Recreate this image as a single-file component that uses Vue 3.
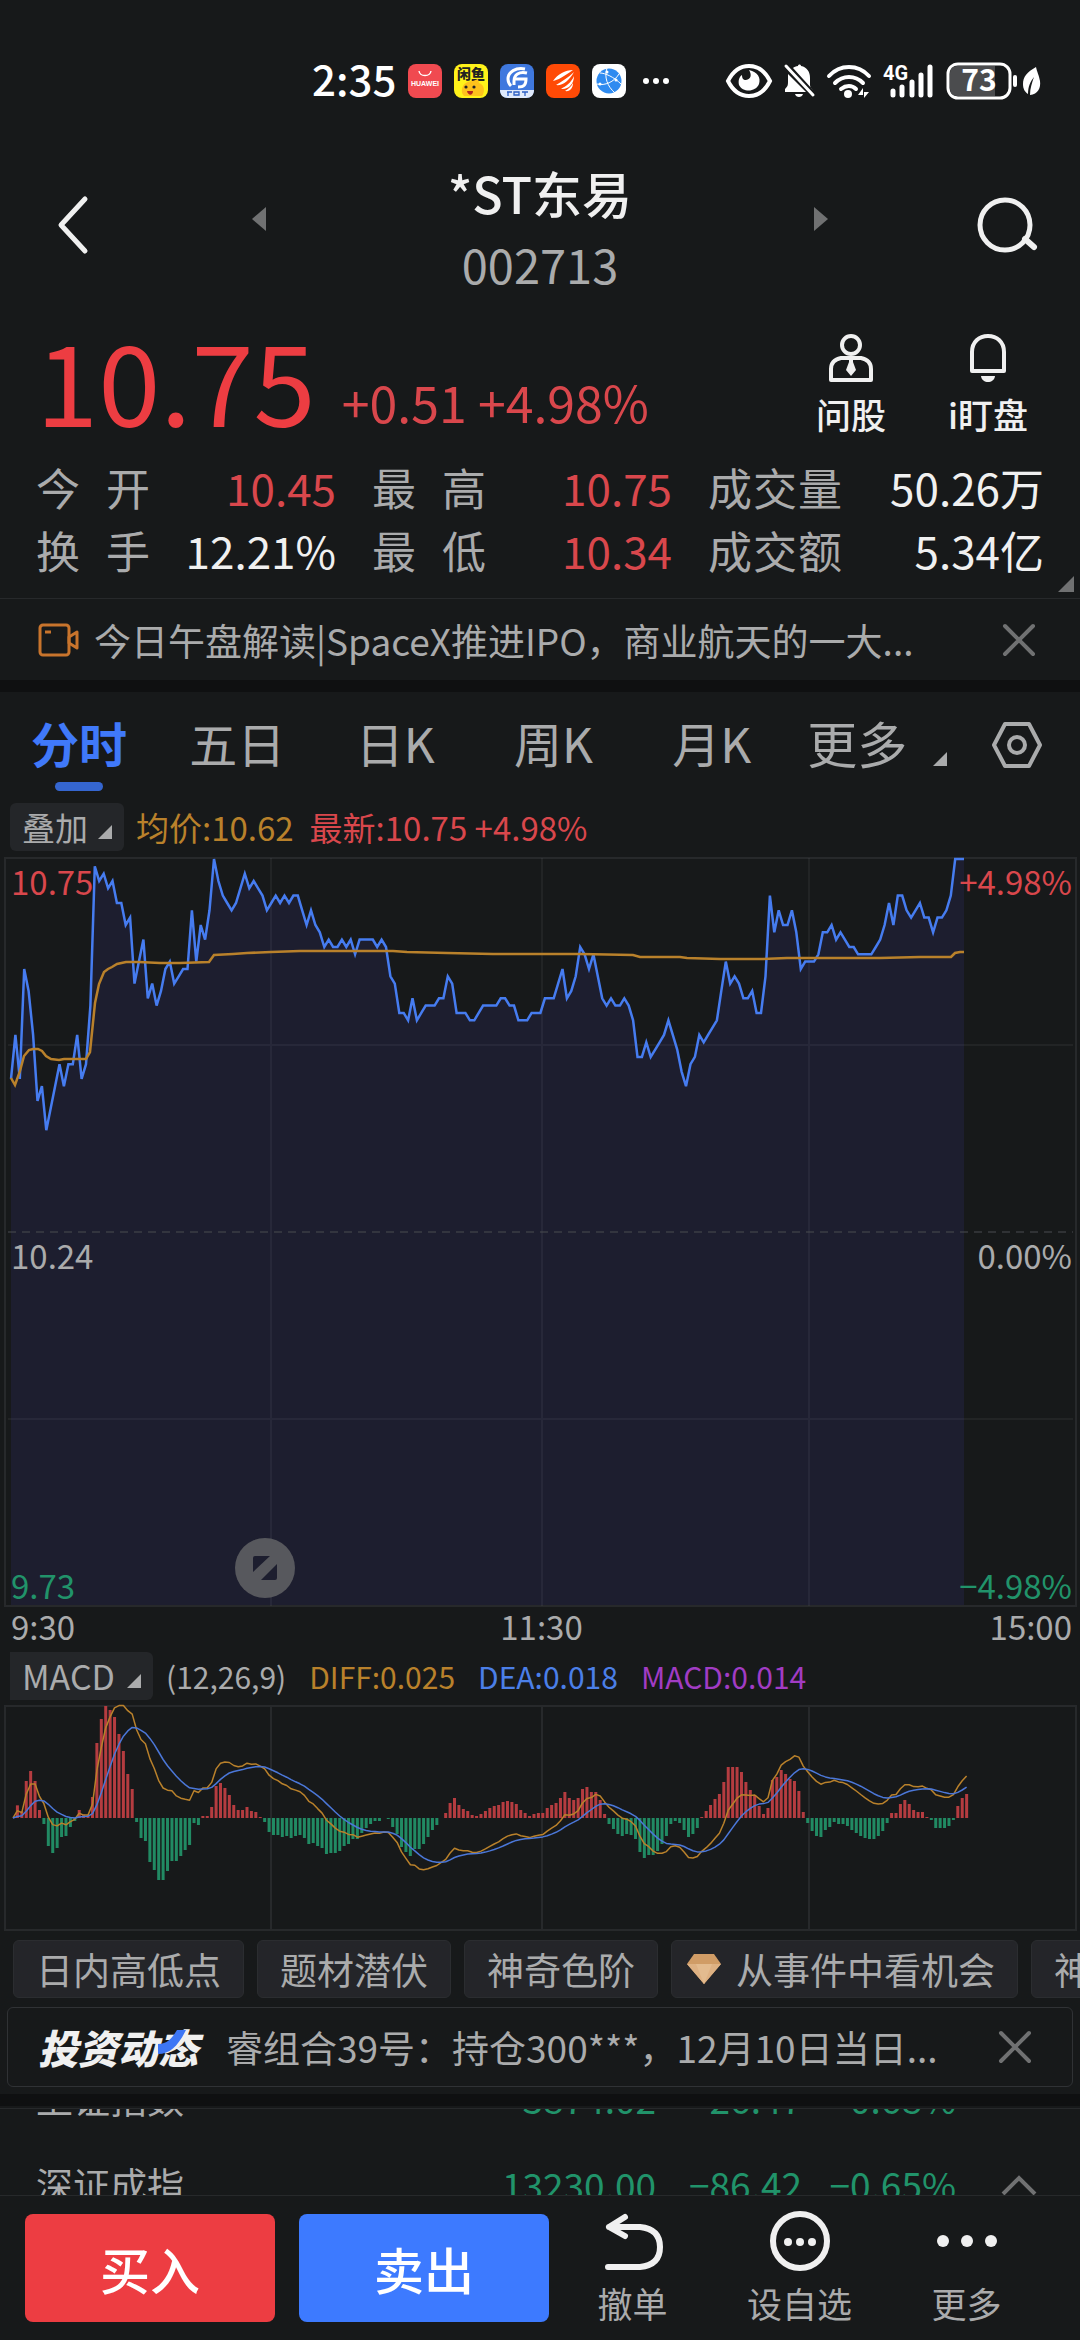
<script setup>
import { ref } from 'vue'

const stats = [
  { label: ['今', '开'], value: '10.45', tone: 'up' },
  { label: ['最', '高'], value: '10.75', tone: 'up' },
  { label: ['成', '交', '量'], value: '50.26万', tone: '' },
  { label: ['换', '手'], value: '12.21%', tone: '' },
  { label: ['最', '低'], value: '10.34', tone: 'up' },
  { label: ['成', '交', '额'], value: '5.34亿', tone: '' },
]

const tabs = ['分时', '五日', '日K', '周K', '月K']
const activeTab = ref('分时')

const indexes = [
  { name: '上证指数', price: '3874.02', diff: '-26.47', pct: '-0.68%' },
  { name: '深证成指', price: '13230.00', diff: '−86.42', pct: '−0.65%' },
]

// ── Minute chart ─────────────────────────────────────────────
// one value per minute, in cents below the upper limit (10.75)
const ticks = [
  30, 24, 30, 15, 18, 24, 33, 31, 37, 34, 31, 28, 31, 28, 28, 24, 30, 28, 20, 1,
  3, 2, 4, 3, 6, 6, 9, 8, 17, 14, 11, 19, 17, 20, 18, 15, 14, 17, 16, 15,
  15, 7, 14, 9, 11, 7, 0, 3, 5, 6, 7, 6, 4, 2, 4, 3, 4, 5, 7, 6,
  5, 6, 5, 6, 5, 5, 7, 9, 7, 9, 10, 12, 11, 12, 12, 11, 12, 11, 13, 11,
  11, 11, 11, 12, 11, 12, 16, 17, 21, 21, 22, 19, 22, 21, 20, 20, 20, 19, 19, 16,
  17, 21, 21, 21, 22, 22, 21, 20, 20, 20, 20, 19, 19, 20, 20, 22, 22, 22, 21, 21,
  21, 19, 19, 19, 17, 15, 19, 18, 16, 12, 13, 15, 13, 16, 19, 20, 19, 20, 20, 19,
  20, 22, 27, 27, 25, 27, 26, 25, 24, 22, 24, 26, 29, 31, 28, 27, 24, 25, 24, 23,
  22, 18, 14, 17, 16, 17, 19, 19, 18, 21, 21, 16, 5, 10, 7, 9, 9, 7, 10, 15,
  14, 14, 14, 13, 10, 10, 9, 11, 10, 11, 12, 12, 13, 13, 13, 13, 12, 11, 9, 6,
  9, 5, 5, 7, 8, 7, 6, 8, 8, 10, 8, 8, 7, 5, 0, 0, 0,
]

const START = 11
const END = 964
const stepX = (END - START) / (ticks.length - 1)
const priceLine = ticks
  .map((t, i) => `${(START + i * stepX).toFixed(1)},${(2 + t * 7.33).toFixed(1)}`)
  .join(' ')
const priceArea = `${START},750 ${priceLine} ${END},750`

const avgLine = [
  [11, 221], [15, 228], [20, 214], [24, 199], [29, 193], [33, 192], [38, 192], [42, 194],
  [46, 199], [51, 202], [59, 203], [64, 202], [86, 202], [90, 195], [95, 146], [99, 127],
  [104, 115], [108, 112], [112, 110], [117, 107], [126, 105], [139, 105], [160, 106],
  [180, 106], [209, 105], [214, 98], [233, 97], [247, 96], [271, 95], [300, 94], [393, 94],
  [407, 95], [447, 96], [493, 97], [580, 97], [633, 98], [640, 100], [680, 100],
  [687, 101], [720, 102], [763, 102], [787, 101], [880, 101], [920, 100], [951, 100],
  [955, 96], [960, 95], [964, 95],
].map((p) => p.join(',')).join(' ')

// ── MACD ─────────────────────────────────────────────────────
// histogram heights, three units to a pixel
const hist = [
  0, 38, 20, 111, 141, 111, 24, -18, -84, -105, -90, -57, -54, -27, -9, 24, 10, 9, 63, 225,
  297, 336, 324, 303, 252, 201, 132, 87, -12, -60, -69, -132, -156, -186, -186, -159, -129, -129, -114, -96,
  -81, -15, -21, 6, 6, 33, 96, 105, 90, 69, 39, 24, 24, 33, 21, 18, 3, -12, -42, -51,
  -51, -57, -54, -60, -54, -51, -60, -78, -75, -84, -90, -108, -105, -105, -99, -84, -78, -63, -63, -45,
  -30, -18, -9, -9, 0, -3, -27, -48, -87, -102, -114, -93, -93, -78, -57, -36, -21, 0, 15, 45,
  60, 39, 27, 21, 9, 6, 12, 21, 30, 36, 39, 48, 51, 48, 42, 24, 15, 6, 12, 15,
  15, 30, 39, 45, 60, 78, 60, 54, 60, 87, 93, 78, 78, 54, 12, -18, -33, -48, -54, -48,
  -51, -63, -102, -120, -111, -111, -99, -78, -54, -18, -9, -15, -36, -57, -48, -30, 3, 21, 39, 57,
  72, 108, 153, 153, 153, 138, 108, 84, 69, 36, 12, 30, 114, 123, 144, 132, 117, 111, 81, 18,
  -15, -39, -54, -57, -36, -27, -12, -18, -18, -24, -36, -45, -54, -60, -63, -63, -54, -39, -15, 15,
  15, 42, 54, 42, 24, 18, 18, 3, -6, -30, -30, -30, -24, -6, 36, 60, 72,
]

const BASE = 113
const barX = (i) => 13 + i * 4.415
const bars = hist
  .map((v, i) => ({ x: barX(i) - 1.5, y: v > 0 ? BASE - v / 3 : BASE, h: Math.abs(v) / 3, up: v > 0 }))
  .filter((b) => b.h > 0)

// DEA follows the running sum of the histogram, DIFF sits half a bar off it
let dea = 0
const deaPts = []
const diffPts = []
hist.forEach((v, i) => {
  dea += v * 0.12
  deaPts.push(`${barX(i).toFixed(1)},${(BASE - dea / 3).toFixed(1)}`)
  diffPts.push(`${barX(i).toFixed(1)},${(BASE - (dea + v * 0.46) / 3).toFixed(1)}`)
})
const deaLine = deaPts.join(' ')
const diffLine = diffPts.join(' ')
</script>

<template>
  <div class="page">
    <!-- Status bar -->
    <div class="status">
      <span class="clock">2:35</span>
      <div class="apps">
        <svg viewBox="0 0 34 34" class="app">
          <rect width="34" height="34" rx="8" fill="#f04a50" />
          <path d="M11 7c1 6 11 6 12 0" fill="none" stroke="#fff" stroke-width="1.4" />
          <text x="17" y="22" class="app-name">HUAWEI</text>
        </svg>
        <svg viewBox="0 0 34 34" class="app">
          <rect width="34" height="34" rx="8" fill="#fff21a" />
          <text x="17" y="15" class="app-cn">闲鱼</text>
          <path d="M8 29c-1-8 4-12 11-12l5-2 1 4c6 2 6 9 3 13H10z" fill="#ffc21c" />
          <circle cx="12" cy="23" r="1.6" fill="#222" />
          <circle cx="20" cy="23" r="1.6" fill="#222" />
          <path d="M13 27h6c0 5-5 5-6 0z" fill="#b3261e" />
        </svg>
        <svg viewBox="0 0 34 34" class="app">
          <rect width="34" height="34" rx="8" fill="#3f78de" />
          <path d="M25 5c-9-2-17 3-17 10 0 3 1 5 3 7M27 9c-8-2-13 2-13 8v4" fill="none" stroke="#fff" stroke-width="3" />
          <path d="M15 15h11c0 6-2 8-8 8" fill="none" stroke="#fff" stroke-width="3" />
          <path d="M0 26h34c0 5-3 8-8 8H8c-5 0-8-3-8-8z" fill="#dfe9fb" />
          <path d="M7 28h5M8 28v4M14 28h5v3h-5zM22 28h6M25 28v4" stroke="#2c5fc4" stroke-width="1.3" fill="none" />
        </svg>
        <svg viewBox="0 0 34 34" class="app">
          <rect width="34" height="34" rx="8" fill="#ff4a06" />
          <path d="M27 6c-8 0-15 4-20 11 5-1 10-4 20-11zM28 8c-6 6-12 9-18 13 6 1 13-4 18-13zM28 12c-3 7-8 10-13 13 7 1 13-5 13-13zM27 19c-2 4-5 6-8 8 5 1 8-3 8-8z" fill="#fff" />
        </svg>
        <svg viewBox="0 0 34 34" class="app">
          <rect width="34" height="34" rx="8" fill="#fff" />
          <circle cx="17" cy="17" r="12.500" fill="#2f8bf0" />
          <path d="M15 4c-3 9 0 18 8 25M5 20c8 2 17-2 22-10M8 9c5 0 14 4 21 11" fill="none" stroke="#fff" />
          <g fill="#fff"><circle cx="8" cy="20" r="1.500" /><circle cx="15" cy="8" r="1.500" /><circle cx="24" cy="16" r="1.500" /></g>
        </svg>
      </div>
      <svg viewBox="0 0 28 8" class="more-dots">
        <g fill="#fff"><circle cx="4" cy="4" r="3" /><circle cx="14" cy="4" r="3" /><circle cx="24" cy="4" r="3" /></g>
      </svg>
      <div class="signals">
        <svg viewBox="0 0 46 36" width="46" height="36">
          <path d="M2 18C7 8 14 3 23 3s16 5 21 15c-5 10-12 15-21 15S7 28 2 18z" fill="none" stroke="#fff" stroke-width="4" />
          <path d="M23 7c9 2 12 8 10 14-3 8-16 9-20 1-1-4 0-8 3-10 0 3 1 5 4 5 5-1 6-5 3-10z" fill="#fff" />
        </svg>
        <svg viewBox="0 0 32 36" width="32" height="36">
          <path d="M10 5c1-1 3-2 5-2 0-2 3-2 3 0 6 1 9 6 9 12v7c0 2 1 3 3 5zM5 11l18 18H2v-3c3-3 3-4 3-8zM12 31h8c-1 4-7 4-8 0z" fill="#fff" />
          <path d="M3 3l27 29" stroke="#fff" stroke-width="3" stroke-linecap="round" />
        </svg>
        <svg viewBox="0 0 46 36" width="46" height="36">
          <g fill="none" stroke="#fff" stroke-width="4" stroke-linecap="round">
            <path d="M3 13c11-12 29-12 40 0" />
            <path d="M9 20c8-8 20-8 28 0" />
            <path d="M15 26c5-4 11-4 15 0" />
          </g>
          <circle cx="22" cy="31" r="4" fill="#fff" />
          <path d="M32 32h5v-7zM38 27v8l5-6h-5" fill="#fff" />
        </svg>
        <svg viewBox="0 0 52 36" width="52" height="36">
          <text x="0" y="17" class="net">4G</text>
          <g stroke="#fff" stroke-width="5" stroke-linecap="round">
            <path d="M10 28v4M19 24v8M29 19v13M38 12v20M47 4v28" />
          </g>
        </svg>
        <svg viewBox="0 0 72 38" width="72" height="38">
          <rect x="2" y="2" width="62" height="34" rx="10" fill="none" stroke="#fff" stroke-width="3" />
          <path d="M11 4h38v30H11q-7 0-7-7V11q0-7 7-7z" fill="#4b4c4e" />
          <rect x="67" y="13" width="4" height="12" rx="2" fill="#fff" />
          <text x="33" y="29" class="battery">73</text>
        </svg>
        <svg viewBox="0 0 20 30" class="leaf">
          <path d="M14 1C5 6 1 11 1 18c0 5 2 8 5 10 0-7 2-12 6-17-2 6-4 11-4 18 8-1 11-7 10-14-1-6-3-9-4-14z" fill="#fff" />
        </svg>
      </div>
    </div>

    <!-- Header -->
    <header class="head">
      <button class="icon-btn" aria-label="返回">
        <svg viewBox="0 0 60 60" width="60" height="60">
          <path d="M43 4L19 30l24 26" fill="none" stroke="#f0f0f0" stroke-width="5" stroke-linecap="round" stroke-linejoin="round" />
        </svg>
      </button>
      <div class="head-nav">
        <button class="step" aria-label="上一只">
          <svg viewBox="0 0 14 24" width="14" height="24"><path d="M14 0v24L0 12z" fill="#707172" /></svg>
        </button>
        <div class="head-title">
          <h1>*ST东易</h1>
          <span>002713</span>
        </div>
        <button class="step" aria-label="下一只">
          <svg viewBox="0 0 14 24" width="14" height="24"><path d="M0 0v24l14-12z" fill="#707172" /></svg>
        </button>
      </div>
      <button class="icon-btn end" aria-label="搜索">
        <svg viewBox="0 0 62 60" width="62" height="60">
          <circle cx="29" cy="30" r="25" fill="none" stroke="#f0f0f0" stroke-width="5" />
          <path d="M49 44l9 8" stroke="#f0f0f0" stroke-width="6" stroke-linecap="round" />
        </svg>
      </button>
    </header>

    <!-- Quote -->
    <section class="quote">
      <div class="quote-top">
        <strong class="price">10.75</strong>
        <span class="change">+0.51 +4.98%</span>
        <div class="quick">
          <button>
            <svg viewBox="0 0 48 48" width="48" height="48" fill="none" stroke="#f0f0f0" stroke-width="4">
              <circle cx="24" cy="11" r="9" />
              <path d="M14 24h20q10 2 10 11v11H4V35q0-9 10-11z" stroke-linejoin="round" />
              <path d="M22 25h4v3l3 8-5 6-5-6 3-8z" fill="#f0f0f0" stroke="none" />
            </svg>
            <span>问股</span>
          </button>
          <button>
            <svg viewBox="0 0 48 48" width="48" height="48" fill="none" stroke="#f0f0f0" stroke-width="4">
              <path d="M8 37V18C8 8 15 2 24 2s16 6 16 16v19z" stroke-linejoin="round" />
              <path d="M17 42h14c-1 8-13 8-14 0z" fill="#f0f0f0" stroke="none" />
            </svg>
            <span>i盯盘</span>
          </button>
        </div>
      </div>
      <dl class="stats">
        <div v-for="s in stats" :key="s.label.join('')" class="stat">
          <dt><span v-for="c in s.label" :key="c">{{ c }}</span></dt>
          <dd :class="s.tone">{{ s.value }}</dd>
        </div>
      </dl>
      <svg class="corner" viewBox="0 0 16 16" width="16" height="16"><path d="M16 0v16H0z" fill="#707172" /></svg>
    </section>

    <!-- News strip -->
    <div class="news">
      <svg viewBox="0 0 42 34" width="42" height="34" fill="none" stroke="#c8742c" stroke-width="3" stroke-linejoin="round">
        <rect x="2" y="2" width="29" height="30" rx="3" />
        <path d="M7 9h6M31 14l8-5v16l-8-5z" />
      </svg>
      <a href="#" class="ellipsis">今日午盘解读|SpaceX推进IPO，商业航天的一大...</a>
      <button class="close" aria-label="关闭">
        <svg viewBox="0 0 32 32" width="32" height="32"><path d="M2 2l28 28M30 2L2 30" stroke="#707172" stroke-width="4" stroke-linecap="round" /></svg>
      </button>
    </div>
    <div class="band" />

    <!-- Period tabs -->
    <nav class="tabs">
      <button
        v-for="t in tabs"
        :key="t"
        class="tab"
        :class="{ active: t === activeTab }"
        @click="activeTab = t"
      >{{ t }}</button>
      <button class="tab-more">
        更多
        <svg viewBox="0 0 14 14" width="14" height="14"><path d="M14 0v14H0z" fill="#aaabac" /></svg>
      </button>
      <button class="tab-set" aria-label="设置">
        <svg viewBox="0 0 52 48" width="52" height="48" fill="none" stroke="#aaabac" stroke-width="4" stroke-linejoin="round">
          <path d="M14 3h24l11 21-11 21H14L3 24z" />
          <circle cx="26" cy="24" r="8" />
        </svg>
      </button>
    </nav>

    <!-- Minute chart -->
    <div class="legend">
      <button class="pill">叠加<svg viewBox="0 0 14 14" width="14" height="14"><path d="M14 0v14H0z" fill="#aaabac" /></svg></button>
      <span class="avg">均价:10.62</span>
      <span class="up">最新:10.75 +4.98%</span>
    </div>
    <div class="chart">
      <svg viewBox="0 0 1080 750" class="plot">
        <polygon :points="priceArea" fill="#1d1e2f" />
        <g fill="none" stroke="#27292b" stroke-width="2">
          <rect x="5" y="1" width="1071" height="748" />
          <path d="M271 1v748M542 1v748M809 1v748M8 188h1065M8 562h1065" stroke="#a0a4b0" stroke-opacity=".08" />
        </g>
        <path d="M8 375h1065" stroke="#4a4c50" stroke-width="1" stroke-dasharray="8 6" />
        <polyline :points="priceLine" fill="none" stroke="#467cf0" stroke-width="2.500" />
        <polyline :points="avgLine" fill="none" stroke="#b9812b" stroke-width="2.500" />
      </svg>
      <span class="mark tl up">10.75</span>
      <span class="mark tr up">+4.98%</span>
      <span class="mark ml">10.24</span>
      <span class="mark mr">0.00%</span>
      <span class="mark bl down">9.73</span>
      <span class="mark br down">−4.98%</span>
      <button class="expand" aria-label="横屏">
        <svg viewBox="0 0 60 60" width="60" height="60">
          <circle cx="30" cy="30" r="30" fill="#57585d" />
          <path d="M20 18h15L18 34V20q0-2 2-2zM42 26v14q0 2-2 2H26z" fill="#1d1e2f" />
        </svg>
      </button>
    </div>
    <div class="times">
      <span>9:30</span>
      <span>11:30</span>
      <span>15:00</span>
    </div>

    <!-- MACD -->
    <div class="legend macd">
      <button class="pill flat">MACD<svg viewBox="0 0 14 14" width="14" height="14"><path d="M14 0v14H0z" fill="#aaabac" /></svg></button>
      <span>(12,26,9)</span>
      <span class="avg">DIFF:0.025</span>
      <span class="blue">DEA:0.018</span>
      <span class="purple">MACD:0.014</span>
    </div>
    <svg viewBox="0 0 1080 226" class="plot">
      <g fill="none" stroke="#27292b" stroke-width="2">
        <rect x="5" y="1" width="1071" height="224" />
        <path d="M271 1v224M542 1v224M809 1v224" />
      </g>
      <rect
        v-for="b in bars"
        :key="b.x"
        :x="b.x"
        :y="b.y"
        width="3"
        :height="b.h"
        :fill="b.up ? '#b53c40' : '#218a63'"
      />
      <polyline :points="diffLine" fill="none" stroke="#b9812b" stroke-width="1.500" stroke-linejoin="round" />
      <polyline :points="deaLine" fill="none" stroke="#4b77d8" stroke-width="1.500" stroke-linejoin="round" />
    </svg>

    <!-- Indicator chips -->
    <div class="chips">
      <button>日内高低点</button>
      <button>题材潜伏</button>
      <button>神奇色阶</button>
      <button>
        <svg viewBox="0 0 34 30" width="34" height="30">
          <path d="M7 0h20l7 10-17 20L0 10z" fill="#d09c66" />
          <path d="M0 10h34L17 30z" fill="#deb183" />
          <path d="M9 10h16l-8 20z" fill="#e3bb8f" />
        </svg>
        从事件中看机会
      </button>
      <button>神奇电波</button>
    </div>

    <!-- Investment feed -->
    <div class="feed">
      <div class="feed-logo">
        <span>投资动态</span>
        <svg viewBox="0 0 28 24" width="28" height="24"><path d="M28 0H19C14 8 10 14 0 14v10c12 0 20-8 28-24z" fill="#3d76f5" /></svg>
      </div>
      <a href="#" class="ellipsis">睿组合39号：持仓300***，12月10日当日...</a>
      <button class="close" aria-label="关闭">
        <svg viewBox="0 0 32 32" width="32" height="32"><path d="M2 2l28 28M30 2L2 30" stroke="#707172" stroke-width="4" stroke-linecap="round" /></svg>
      </button>
    </div>
    <div class="band" />

    <!-- Market indexes, scrolled part way -->
    <div class="indexes">
      <table>
        <tbody>
          <tr v-for="x in indexes" :key="x.name">
            <th scope="row">{{ x.name }}</th>
            <td class="c-price">{{ x.price }}</td>
            <td class="c-diff">{{ x.diff }}</td>
            <td class="c-pct">{{ x.pct }}</td>
          </tr>
        </tbody>
      </table>
      <button class="caret" aria-label="展开">
        <svg viewBox="0 0 36 22" width="36" height="22"><path d="M2 20L18 4l16 16" fill="none" stroke="#707172" stroke-width="4" /></svg>
      </button>
    </div>

    <!-- Trade bar -->
    <footer class="trade">
      <button class="deal buy">买入</button>
      <button class="deal sell">卖出</button>
      <div class="tools">
        <button>
          <svg viewBox="0 0 60 60" width="60" height="60" fill="none" stroke="#f0f0f0" stroke-width="6" stroke-linecap="round" stroke-linejoin="round">
            <path d="M22 6L6 16l16 9M6 16h31q20 2 20 20t-20 20H5" />
          </svg>
          <span>撤单</span>
        </button>
        <button>
          <svg viewBox="0 0 60 60" width="60" height="60">
            <circle cx="30" cy="30" r="27" fill="none" stroke="#f0f0f0" stroke-width="6" />
            <g fill="#f0f0f0"><circle cx="18" cy="31" r="4" /><circle cx="30" cy="31" r="4" /><circle cx="42" cy="31" r="4" /></g>
          </svg>
          <span>设自选</span>
        </button>
        <button>
          <svg viewBox="0 0 60 60" width="60" height="60">
            <g fill="#f0f0f0"><circle cx="6" cy="30" r="6" /><circle cx="30" cy="30" r="6" /><circle cx="54" cy="30" r="6" /></g>
          </svg>
          <span>更多</span>
        </button>
      </div>
    </footer>
  </div>
</template>

<style>
body {
  background: #17191a;
}
</style>

<style scoped>
.page {
  min-height: 100vh;
  display: flex;
  flex-direction: column;
  background: #17191a;
  color: #aaabac;
  font-family: 'Noto Sans CJK SC', sans-serif;
  overflow: hidden;
}

button {
  padding: 0;
  border: 0;
  background: none;
  color: inherit;
  font: inherit;
  white-space: nowrap;
}

svg { display: block; flex-shrink: 0; overflow: visible; }

a { color: inherit; text-decoration: none; }

.up { color: #d9474c; }
.down { color: #21936a; }
.avg { color: #b9812b; }
.blue { color: #4b7fe8; }
.purple { color: #a13cc4; }

.ellipsis {
  flex: 1;
  overflow: hidden;
  white-space: nowrap;
  text-overflow: ellipsis;
}

/* ── Status bar ─────────────────────────────────────────────── */
.status {
  display: flex;
  align-items: center;
  height: 162px;
  padding: 0 38px 0 312px;
  color: #fff;
}

.clock {
  font-size: 42px;
  font-weight: 500;
  line-height: 60px;
  margin-bottom: 6px;
}

.apps {
  display: flex;
  gap: 12px;
  margin-left: 12px;
}

.app { width: 34px; height: 34px; }
.app-name { font: 700 7px 'Liberation Sans', sans-serif; fill: #fff; text-anchor: middle; }
.app-cn { font: 900 14px 'Noto Sans CJK SC', sans-serif; fill: #222; text-anchor: middle; }
.net { font: 700 20px Roboto, sans-serif; fill: #fff; }
.battery { font: 700 30px 'Noto Sans CJK SC', sans-serif; fill: #fff; text-anchor: middle; }

.more-dots { width: 28px; height: 8px; margin-left: 16px; }

.signals {
  display: flex;
  align-items: center;
  gap: 11px;
  margin-left: auto;
}

.leaf { width: 20px; height: 30px; margin-left: -7px; }

/* ── Header ─────────────────────────────────────────────────── */
.head {
  display: grid;
  grid-template-columns: 210px 1fr 210px;
  align-items: center;
  padding: 0 42px;
}

.icon-btn { padding-bottom: 10px; justify-self: start; }
.icon-btn.end { justify-self: end; }

.head-nav {
  display: flex;
  align-items: center;
  justify-content: space-between;
}

.step { padding-bottom: 22px; }

.head-title {
  display: flex;
  flex-direction: column;
  align-items: center;
  gap: 12px;
  padding-bottom: 4px;
  font-size: 47px;
  line-height: 60px;
}

.head-title h1 {
  margin: 0;
  color: #f0f0f0;
  font-size: 50px;
  font-weight: 500;
  line-height: 60px;
}

/* ── Quote ──────────────────────────────────────────────────── */
.quote {
  position: relative;
  padding: 22px 36px 16px;
}

.quote-top {
  display: flex;
  align-items: flex-end;
}

.price {
  color: #ed3d42;
  font-size: 112px;
  font-weight: 400;
  line-height: 116px;
}

.change {
  margin-left: 26px;
  color: #d9474c;
  font-size: 50px;
  line-height: 70px;
}

.quick {
  display: flex;
  gap: 62px;
  margin-left: auto;
  padding-right: 16px;
  color: #f0f0f0;
  font-size: 35px;
  font-weight: 500;
  line-height: 44px;
}

.quick button {
  display: flex;
  flex-direction: column;
  align-items: center;
  gap: 10px;
}

.stats {
  display: grid;
  grid-template-columns: 25fr 25fr 28fr;
  column-gap: 36px;
  margin: 0;
  padding-top: 20px;
}

.stat {
  display: flex;
  justify-content: space-between;
  font-size: 44px;
  line-height: 63px;
}

.stat dt {
  display: flex;
  justify-content: space-between;
  width: 114px;
}

.stat:nth-child(3n) dt { width: 134px; }

.stat dd { margin: 0; color: #f0f0f0; }
.stat dd.up { color: #d9474c; }

.corner {
  position: absolute;
  right: 6px;
  bottom: 6px;
}

/* ── News strip ─────────────────────────────────────────────── */
.news {
  display: flex;
  align-items: center;
  gap: 14px;
  height: 81px;
  padding: 0 45px 0 38px;
  border-top: 1px solid #27292b;
  font-size: 37px;
}

.band { height: 12px; background: #0f1011; }

/* ── Tabs ───────────────────────────────────────────────────── */
.tabs {
  display: flex;
  align-items: flex-start;
  padding: 10px 10px 0 0;
  font-size: 48px;
  line-height: 80px;
}

.tab {
  flex: 158;
  display: flex;
  flex-direction: column;
  align-items: center;
}

.tab.active { color: #4079fa; font-weight: 700; }

.tab::after {
  content: '';
  width: 48px;
  height: 9px;
  border-radius: 5px;
}

.tab.active::after { background: #3566d0; }

.tab-more {
  flex: 173;
  display: flex;
  align-items: center;
  justify-content: center;
  gap: 26px;
  font-size: 50px;
}

.tab-more svg { align-self: flex-end; margin-bottom: 16px; }

.tab-set {
  flex: 106;
  display: flex;
  align-items: center;
  justify-content: center;
  height: 86px;
}

/* ── Charts ─────────────────────────────────────────────────── */
.legend {
  display: flex;
  align-items: center;
  gap: 16px;
  padding: 12px 10px 6px;
  font-size: 33px;
  line-height: 48px;
}

.pill {
  display: flex;
  align-items: flex-end;
  gap: 10px;
  margin-right: -4px;
  padding: 0 12px;
  border-radius: 6px;
  background: #242629;
}

.pill.flat { gap: 12px; border-radius: 0 6px 6px 0; }
.pill svg { margin-bottom: 12px; }

.legend.macd {
  gap: 23px;
  padding: 0 10px 5px;
  font-size: 30px;
}

.legend.macd .pill { font-size: 34px; margin-right: -10px; }

.chart { position: relative; }

.plot { width: 100%; height: auto; }

.mark {
  position: absolute;
  font-size: 33px;
  line-height: 40px;
}

.tl, .ml, .bl { left: 11px; }
.tr, .mr, .br { right: 8px; }
.tl, .tr { top: 4px; }
.ml, .mr { top: 378px; }
.bl, .br { bottom: 2px; }

.expand {
  position: absolute;
  left: 235px;
  bottom: 9px;
}

.times {
  display: grid;
  grid-template-columns: 1fr auto 1fr;
  padding: 0 8px 7px 11px;
  font-size: 33px;
  line-height: 38px;
}

.times span:last-child { text-align: right; }

/* ── Chips and feed ─────────────────────────────────────────── */
.chips {
  display: flex;
  gap: 13px;
  padding: 9px 0 9px 13px;
  overflow: hidden;
  font-size: 37px;
  line-height: 56px;
}

.chips button {
  display: flex;
  flex-shrink: 0;
  align-items: center;
  gap: 15px;
  padding: 0 22px;
  border: 1px solid #2b2d30;
  border-radius: 6px;
  background: #242529;
}

.chips button:nth-child(4) { padding-left: 15px; }

.feed {
  display: flex;
  align-items: center;
  gap: 28px;
  height: 80px;
  box-sizing: border-box;
  margin: 0 7px 7px;
  padding: 0 41px 0 30px;
  border: 1px solid #303235;
  border-radius: 6px;
  font-size: 37px;
}

.feed-logo {
  position: relative;
  color: #f0f0f0;
  font-size: 40px;
  font-style: italic;
  font-weight: 900;
}

.feed-logo svg {
  position: absolute;
  top: 12px;
  right: 12px;
}

/* ── Indexes ────────────────────────────────────────────────── */
.indexes {
  position: relative;
  height: 86px;
  margin-top: 2px;
  border-top: 1px solid #27292b;
  overflow: hidden;
}

.indexes table {
  width: 100%;
  margin-top: -54px;
  padding: 0 124px 0 36px;
  border-spacing: 0;
  font-size: 37px;
  line-height: 86px;
}

.indexes th { padding: 0; font-weight: 400; text-align: left; }
.indexes td { padding: 0; color: #21936a; text-align: right; }
.c-diff { width: 146px; }
.c-pct { width: 154px; }

.caret {
  position: absolute;
  right: 43px;
  bottom: -1px;
}

/* ── Trade bar ──────────────────────────────────────────────── */
.trade {
  display: flex;
  align-items: flex-end;
  gap: 24px;
  padding: 15px 30px 18px 25px;
  border-top: 1px solid #27292b;
}

.deal {
  flex: 250;
  height: 108px;
  margin-top: 3px;
  border-radius: 8px;
  color: #fff;
  font-size: 50px;
  font-weight: 500;
}

.buy { background: #ed3d42; }
.sell { background: #3d7aff; }

.tools {
  flex: 501;
  align-self: stretch;
  display: flex;
  margin-left: -24px;
  font-size: 35px;
  line-height: 38px;
}

.tools button {
  flex: 1;
  display: flex;
  flex-direction: column;
  align-items: center;
  justify-content: space-between;
}
</style>
